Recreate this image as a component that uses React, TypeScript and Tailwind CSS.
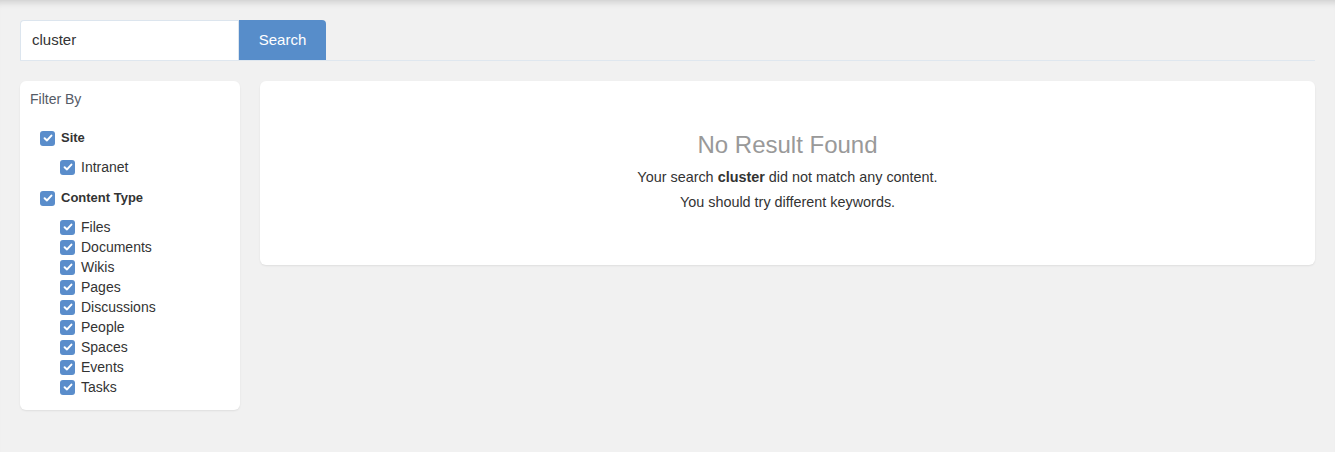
import React from "react";

const Check = () => (
  <span className="inline-flex w-[15px] h-[15px] rounded-[3px] bg-[#5a8dcb] items-center justify-center shrink-0">
    <svg width="10" height="10" viewBox="0 0 10 10">
      <path d="M1.6 5.2 L4 7.4 L8.4 2.6" stroke="white" strokeWidth="2" fill="none" strokeLinecap="round" strokeLinejoin="round" />
    </svg>
  </span>
);

const items = ["Files", "Documents", "Wikis", "Pages", "Discussions", "People", "Spaces", "Events", "Tasks"];

export default function App() {
  return (
    <div
      className="min-h-[452px] bg-[#f1f1f1] shadow-[inset_0_8px_7px_-6px_rgba(0,0,0,0.16)] px-[20px] pt-[20px]"
      style={{ fontFamily: '"Liberation Sans", Arial, sans-serif' }}
    >
      <div className="flex border-b border-[#dfe7ef]">
        <div className="w-[219px] h-[40px] bg-white border border-[#dce5ee] border-b-0 rounded-tl-[4px] flex items-center pl-[11px] text-[15px] text-[#333]">
          cluster
        </div>
        <div className="w-[87px] h-[40px] bg-[#578dca] text-white text-[15px] flex items-center justify-center rounded-tr-[4px]">
          Search
        </div>
      </div>
      <div className="flex gap-[20px] mt-[20px] items-start">
        <div className="w-[220px] bg-white rounded-[6px] shadow-[0_1px_2px_rgba(0,0,0,0.08)] pt-[9px] pb-[13px] px-[10px]">
          <div className="text-[14px] leading-[18px] text-[#555b66]">Filter By</div>
          <div className="mt-[20px] pl-[10px]">
            <div className="flex items-center gap-[6px] h-[20px] text-[13px] font-bold text-[#333]">
              <Check />
              <span>Site</span>
            </div>
            <div className="flex items-center gap-[6px] h-[20px] mt-[9px] pl-[20px] text-[14px] text-[#333]">
              <Check />
              <span>Intranet</span>
            </div>
            <div className="flex items-center gap-[6px] h-[20px] mt-[11px] text-[13px] font-bold text-[#333]">
              <Check />
              <span>Content Type</span>
            </div>
            <div className="mt-[9px]">
              {items.map((t) => (
                <div key={t} className="flex items-center gap-[6px] h-[20px] pl-[20px] text-[14px] text-[#333]">
                  <Check />
                  <span>{t}</span>
                </div>
              ))}
            </div>
          </div>
        </div>
        <div className="flex-1 bg-white rounded-[6px] shadow-[0_1px_2px_rgba(0,0,0,0.08)] pt-[49px] pb-[53px] flex flex-col items-center text-[#333]">
          <div className="text-[24px] leading-[30px] text-[#999]">No Result Found</div>
          <div className="text-[14.4px] leading-[20px] mt-[7px]">
            Your search <b>cluster</b> did not match any content.
          </div>
          <div className="text-[14.4px] leading-[20px] mt-[5px]">You should try different keywords.</div>
        </div>
      </div>
    </div>
  );
}
